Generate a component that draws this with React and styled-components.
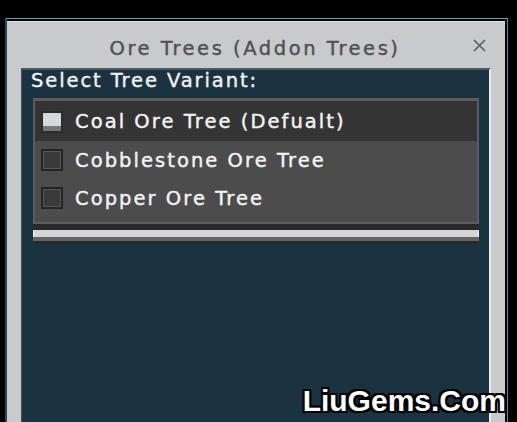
import styled, { createGlobalStyle } from 'styled-components';

const GlobalStyle = createGlobalStyle`
  html, body {
    margin: 0;
    padding: 0;
    background: #000;
    height: 100%;
    overflow: hidden;
  }
`;

const Page = styled.div`
  position: relative;
  width: 517px;
  height: 422px;
  overflow: hidden;
  background: #000;
  padding: 18px 9px 0 5px;
  box-sizing: border-box;
`;

const Frame = styled.div`
  height: 404px;
  padding: 2px 2px 0 0;
  border-top: 1px solid #6f9fb0;
  border-left: 2px solid #1d4a5c;
  border-right: 1px solid #4b8ea3;
  box-sizing: border-box;
  display: flex;
  flex-direction: column;
`;

const Window = styled.div`
  flex: 1;
  display: flex;
  flex-direction: column;
  background: #c9cacc;
  border-top: 1px solid #e2e3e4;
  padding: 0 14px 0 14px;
  min-height: 0;
`;

const TitleBar = styled.div`
  height: 46px;
  flex: none;
  display: flex;
  align-items: center;
  justify-content: center;
  position: relative;
`;

const Title = styled.div`
  font: 19.5px "DejaVu Sans", sans-serif;
  letter-spacing: 2.55px;
  -webkit-text-stroke: 0.4px #505052;
  color: #505052;
  margin-left: -2px;
  margin-top: 6px;
`;

const CloseIcon = styled.svg`
  position: absolute;
  right: 5px;
  top: 17px;
  width: 13px;
  height: 13px;
`;

const Content = styled.div`
  flex: 1;
  background: #1b3340;
  border-top: 2px solid #4d5a62;
  border-left: 1px solid #444e54;
  border-right: 2px solid #eceded;
  padding: 0 10px 0 10px;
  min-height: 0;
`;

const Label = styled.div`
  font: 19.5px "DejaVu Sans", sans-serif;
  letter-spacing: 1.9px;
  -webkit-text-stroke: 0.4px #f2f2f2;
  color: #f2f2f2;
  height: 28px;
  line-height: 21px;
  margin-left: -1px;
`;

const ListBox = styled.div`
  background: #4c4c4d;
  border-top: 3px solid #5c5c5e;
  border-left: 2px solid #5c5c5e;
  border-right: 2px solid #5c5c5e;
  border-bottom: 2px solid #5c5c5e;
  height: 126px;
  margin-left: 1px;
  box-sizing: border-box;
`;

const Row = styled.div`
  height: ${(p) => (p.$active ? '40px' : '38px')};
  padding-top: ${(p) => (p.$active ? '1px' : '0')};
  box-sizing: border-box;
  display: flex;
  align-items: center;
  gap: 12px;
  padding-left: 6px;
  background: ${(p) => (p.$active ? '#343435' : 'transparent')};
`;

const Check = styled.div`
  width: 22px;
  height: 22px;
  box-sizing: border-box;
  flex: none;
  border: 2px solid ${(p) => (p.$active ? '#2b2b2c' : '#242425')};
  background: ${(p) =>
    p.$active
      ? 'linear-gradient(#d6d7d8 0 70%, #77777a 70%)'
      : '#3a3a3b'};
  box-shadow: ${(p) => (p.$active ? 'none' : 'inset 0 0 0 1px #56565a')};
`;

const RowText = styled.div`
  font: 19.5px "DejaVu Sans", sans-serif;
  letter-spacing: 2.05px;
  -webkit-text-stroke: 0.4px #f4f4f4;
  color: #f4f4f4;
  white-space: nowrap;
`;

const Slider = styled.div`
  height: 20px;
  margin-left: 1px;
  box-sizing: border-box;
  background: #2a2a2b;
  padding-top: 6px;
`;

const SliderTrack = styled.div`
  height: 7px;
  background: #d3d4d5;
  border-left: 1px solid #f0f0f0;
  border-right: 1px solid #f0f0f0;
`;

const SliderShade = styled.div`
  height: 4px;
  background: #636364;
`;

const Watermark = styled.div`
  position: absolute;
  right: 11px;
  bottom: 4px;
  font: bold 30px "Liberation Sans", Arial, sans-serif;
  color: #fff;
  text-shadow: -2px 0 #000, 2px 0 #000, 0 -2px #000, 0 2px #000,
    -2px -2px #000, 2px -2px #000, -2px 2px #000, 2px 2px #000;
  white-space: nowrap;
`;

const rows = ['Coal Ore Tree (Defualt)', 'Cobblestone Ore Tree', 'Copper Ore Tree'];

export default function App() {
  return (
    <>
      <GlobalStyle />
      <Page>
        <Frame>
          <Window>
            <TitleBar>
              <Title>Ore Trees (Addon Trees)</Title>
              <CloseIcon viewBox="0 0 13 13">
                <path d="M1 1 L12 12 M12 1 L1 12" stroke="#5c5c60" strokeWidth="1.6" fill="none" />
              </CloseIcon>
            </TitleBar>
            <Content>
              <Label>Select Tree Variant:</Label>
              <ListBox>
                {rows.map((name, i) => (
                  <Row key={name} $active={i === 0}>
                    <Check $active={i === 0} />
                    <RowText>{name}</RowText>
                  </Row>
                ))}
              </ListBox>
              <Slider>
                <SliderTrack />
                <SliderShade />
              </Slider>
            </Content>
          </Window>
        </Frame>
        <Watermark>LiuGems.Com</Watermark>
      </Page>
    </>
  );
}
